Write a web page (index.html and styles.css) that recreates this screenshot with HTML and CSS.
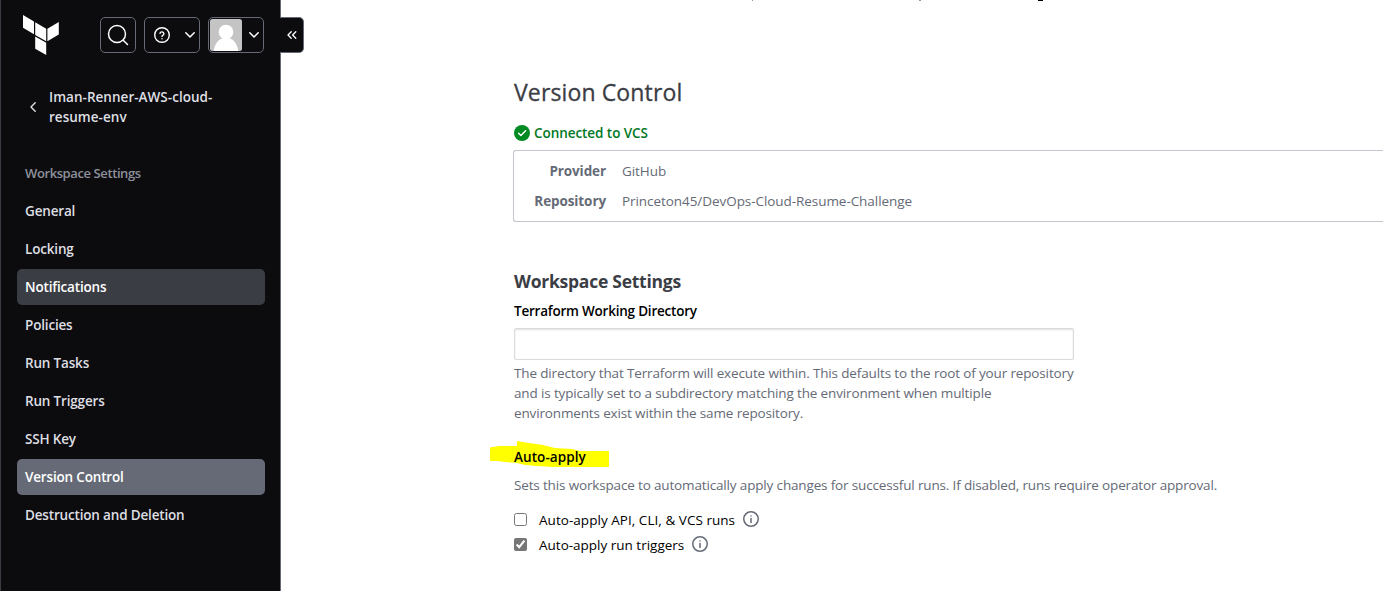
FILE: index.html
```
<!DOCTYPE html>
<html lang="en">
<head>
<meta charset="utf-8">
<title>Version Control</title>
<link rel="stylesheet" href="styles.css">
</head>
<body>
<div class="app">
  <aside class="sidebar">
    <header class="topbar">
      <svg class="logo" width="36" height="40" viewBox="0 0 36 40" fill="#fff">
        <path d="M0 0l11 6.600v12.600L0 12.800zM12.200 7.300l11 6.400v12.500l-11-6.300zM24.400 13.700L35.800 7v12.600l-11.400 6.600zM12.200 21.400l11 6.300V40l-11-6.300z"/>
      </svg>
      <div class="controls">
        <button class="btn search">
          <svg width="24" height="24" viewBox="0 0 24 24" fill="none" stroke="#fff" stroke-width="1.500" stroke-linecap="round"><circle cx="11" cy="11" r="8.500"/><path d="M17.200 17.200l4.300 4.300"/></svg>
        </button>
        <button class="btn help">
          <svg width="16" height="16" viewBox="0 0 16 16" fill="none" stroke="#fff" stroke-width="1.400" stroke-linecap="round" stroke-linejoin="round"><circle cx="8" cy="8" r="7.300"/><path d="M6 6.300a2 2 0 0 1 3.900.5c0 1.300-1.900 1.500-1.900 2.600"/><path d="M8 11.600v.1"/></svg>
          <svg class="chev" width="10" height="6" viewBox="0 0 10 6"><path d="M.8.800L5 5 9.200.800"/></svg>
        </button>
        <button class="btn user">
          <svg class="avatar" width="32" height="32" viewBox="0 0 32 32"><rect width="32" height="32" rx="2.500" fill="#c4c4c4"/><circle cx="16" cy="13" r="7.300" fill="#fff"/><path d="M3.800 32c.8-7.300 4.800-12 9.200-12.700h6c4.400.7 8.400 5.400 9.200 12.700z" fill="#fff"/></svg>
          <svg class="chev" width="10" height="6" viewBox="0 0 10 6"><path d="M.8.800L5 5 9.200.800"/></svg>
        </button>
      </div>
    </header>
    <a class="back">
      <svg width="6" height="10" viewBox="0 0 6 10" fill="none" stroke="#dedfe3" stroke-width="1.400" stroke-linecap="round" stroke-linejoin="round"><path d="M5.200.800L1 5l4.200 4.200"/></svg>
      <span>Iman-Renner-AWS-cloud-<br>resume-env</span>
    </a>
    <nav class="nav">
      <div class="item title">Workspace Settings</div>
      <a class="item">General</a>
      <a class="item">Locking</a>
      <a class="item hover">Notifications</a>
      <a class="item">Policies</a>
      <a class="item">Run Tasks</a>
      <a class="item">Run Triggers</a>
      <a class="item">SSH Key</a>
      <a class="item active">Version Control</a>
      <a class="item">Destruction and Deletion</a>
    </nav>
    <button class="collapse">
      <svg width="10" height="8" viewBox="0 0 10 8" fill="none" stroke="#fff" stroke-width="1.300" stroke-linecap="round" stroke-linejoin="round"><path d="M4.200.800L1 4l3.200 3.200M8.800.800L5.600 4l3.200 3.200"/></svg>
    </button>
  </aside>
  <main class="main">
    <svg class="clipped" width="300" height="1" viewBox="0 0 300 1"><path d="M2 0h1v1H2z" fill="#999"/><path d="M169 0h2v1h-2z" fill="#8e9cae"/><path d="M288 0h5v1h-5z" fill="#000"/></svg>
    <h1>Version Control</h1>
    <div class="status">
      <svg width="16" height="16" viewBox="0 0 16 16"><circle cx="8" cy="8" r="8" fill="#008a22"/><path d="M4.600 8.300l2.300 2.200 4.700-4.700" fill="none" stroke="#fff" stroke-width="1.500" stroke-linecap="round" stroke-linejoin="round"/></svg>
      <span>Connected to VCS</span>
    </div>
    <dl class="vcs">
      <dt>Provider</dt><dd>GitHub</dd>
      <dt>Repository</dt><dd>Princeton45/DevOps-Cloud-Resume-Challenge</dd>
    </dl>
    <h2>Workspace Settings</h2>
    <label class="label" for="dir">Terraform Working Directory</label>
    <input class="field" id="dir" type="text">
    <p class="hint">The directory that Terraform will execute within. This defaults to the root of your repository<br>and is typically set to a subdirectory matching the environment when multiple<br>environments exist within the same repository.</p>
    <div class="auto">
      <svg class="marker" width="120" height="28" viewBox="0 0 120 28"><path d="M0 6.500L9 5h18V0l12 2 14 2 12 3 17 1 8 2h29v16H63l-16-1-12-1-8-2-12-1-8-1H0z" fill="#ff0"/></svg>
      <span class="label auto-label">Auto-apply</span>
    </div>
    <p class="desc">Sets this workspace to automatically apply changes for successful runs. If disabled, runs require operator approval.</p>
    <div class="check">
      <input type="checkbox" id="a"><label class="runs" for="a">Auto-apply API, CLI, &amp; VCS runs</label>
      <svg class="info" width="16" height="16" viewBox="0 0 16 16"><circle cx="8" cy="8" r="7.250"/><path d="M8 7.500v4M8 4.900v.1"/></svg>
    </div>
    <div class="check">
      <input type="checkbox" id="b" checked><label for="b">Auto-apply run triggers</label>
      <svg class="info" width="16" height="16" viewBox="0 0 16 16"><circle cx="8" cy="8" r="7.250"/><path d="M8 7.500v4M8 4.900v.1"/></svg>
    </div>
  </main>
</div>
</body>
</html>
```
FILE: styles.css
```
* { box-sizing: border-box; }
body {
  margin: 0;
  background: #fff;
  font: 400 13.5px/20px "Open Sans", "Noto Sans", sans-serif;
  color: #656a76;
  overflow: hidden;
}
h1, h2, p, dl, dd { margin: 0; }
svg { flex: none; display: block; }
button { font: inherit; color: inherit; }
.app { display: flex; height: 591px; }

.sidebar {
  position: relative;
  flex: none;
  width: 281px;
  padding: 0 15px 0 16px;
  background: #0c0c0e;
  border-left: 1px solid #3b3d45;
  border-right: 1px solid #656a76;
  color: #dedfe3;
  font-weight: 600;
}
.topbar { display: flex; justify-content: space-between; padding: 15px 1px 0 6px; height: 78px; }
.controls { display: flex; gap: 8px; padding-top: 2px; }
.btn {
  display: flex;
  align-items: center;
  height: 36px;
  padding: 0;
  background: #0c0c0e;
  border: 1px solid #656a76;
  border-radius: 5px;
}
.search { width: 36px; justify-content: center; }
.help { width: 56px; padding-left: 9px; gap: 15px; }
.user { width: 56px; padding-left: 1px; gap: 7px; }
.chev { fill: none; stroke: #fff; stroke-width: 1.5; stroke-linecap: round; stroke-linejoin: round; }
.back { display: flex; align-items: center; gap: 13px; padding: 9px 0 0 13px; height: 49px; }
.back span { letter-spacing: 0.03px; }
.nav { display: flex; flex-direction: column; gap: 2px; padding-top: 28px; }
.item { height: 36px; padding: 8px; border-radius: 5px; letter-spacing: -0.17px; }
.title { color: #8c909c; font-size: 13px; letter-spacing: -0.4px; }
.hover { background: #3b3d45; color: #fff; }
.active { background: #656a76; color: #fff; }
.collapse {
  position: absolute;
  left: 279px;
  top: 17px;
  width: 24px;
  height: 36px;
  padding: 0;
  display: flex;
  align-items: center;
  justify-content: center;
  background: #0c0c0e;
  border: 1px solid #656a76;
  border-left: 0;
  border-radius: 0 5px 5px 0;
}

.main { flex: 1; min-width: 0; padding: 0 0 0 233px; }
.clipped { margin: 0 0 75px 236px; }
h1 {
  font-size: 23px;
  line-height: 32px;
  font-weight: 500;
  letter-spacing: 0.13px;
  color: #3b3d45;
  -webkit-text-stroke: 0.3px #3b3d45;
}
.status { display: flex; align-items: center; gap: 4px; margin-top: 15px; color: #00781e; font-weight: 600; letter-spacing: -0.06px; }
.vcs {
  display: grid;
  grid-template-columns: 72px 1fr;
  gap: 10px 16px;
  height: 72px;
  margin: 7px 0 0 -1px;
  padding: 10px 20px;
  border: 1px solid #c2c5cb;
  border-right: 0;
  border-radius: 3px 0 0 3px;
  letter-spacing: -0.06px;
}
.vcs dt { text-align: right; font-weight: 700; letter-spacing: -0.1px; }
h2 { margin-top: 47px; font-size: 17.5px; line-height: 24px; font-weight: 700; letter-spacing: -0.25px; color: #3b3d45; }
.label { display: block; margin-top: 8px; color: #000; font-weight: 600; letter-spacing: -0.22px; }
.field {
  display: block;
  width: 560px;
  height: 32px;
  margin-top: 7px;
  border: 1px solid #dbdbdc;
  border-radius: 2px;
  box-shadow: inset 0 1px 2px #dedfe3;
}
.hint { margin-top: 3px; letter-spacing: -0.145px; }
.auto { position: relative; margin-top: 24px; }
.auto-label { position: relative; margin: 0; letter-spacing: 0.08px; }
.marker { position: absolute; left: -24px; top: -6px; }
.desc { margin: 8px 0 12px; letter-spacing: -0.155px; }
.check { display: flex; align-items: center; height: 25px; color: #000; }
.check input { width: 13px; height: 13px; margin: 0 12px 0 0; accent-color: #767676; }
.runs { letter-spacing: 0.04px; }
.info { margin: -1px 0 0 8px; fill: none; stroke: #656a76; stroke-width: 1.5; stroke-linecap: round; }
```
